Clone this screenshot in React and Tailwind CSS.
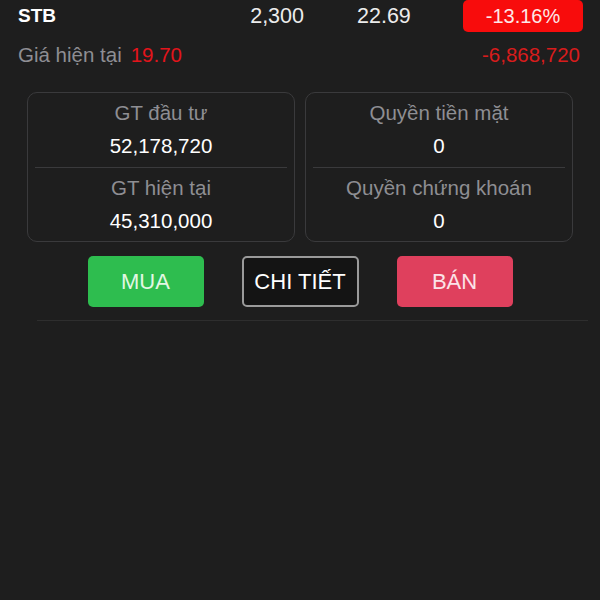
import React from "react";

const boxes = [
  [
    { label: "GT đầu tư", value: "52,178,720" },
    { label: "GT hiện tại", value: "45,310,000" },
  ],
  [
    { label: "Quyền tiền mặt", value: "0" },
    { label: "Quyền chứng khoán", value: "0" },
  ],
];

function InfoBox({ items }) {
  return (
    <div className="h-[150px] rounded-[10px] border border-[#3a3a3c] flex flex-col">
      {items.map((it, i) => (
        <React.Fragment key={it.label}>
          {i > 0 && <div className="mx-[7px] h-px bg-[#3a3a3c]" />}
          <div className="flex-1 flex flex-col items-center pt-[8px]">
            <div className="text-[20.5px] leading-[24px] text-[#8e8e93]">{it.label}</div>
            <div className="mt-[9px] text-[20.5px] leading-[24px] text-white">{it.value}</div>
          </div>
        </React.Fragment>
      ))}
    </div>
  );
}

export default function App() {
  return (
    <div className="w-[600px] h-[600px] bg-[#1e1e1e] overflow-hidden font-['Liberation_Sans',Arial,sans-serif]">
      <div className="flex items-center h-[32px] pl-[18px] pr-[17px] text-[21.5px] text-[#ececec]">
        <div className="w-[200px] text-[19px] font-bold text-white">STB</div>
        <div className="w-[86px] text-right">2,300</div>
        <div className="ml-[53px]">22.69</div>
        <div className="ml-auto w-[120px] h-[32px] rounded-[5px] bg-[#f80c0c] flex items-center justify-center text-[20px] text-[#fde8e8]">
          -13.16%
        </div>
      </div>

      <div className="flex items-center h-[30px] mt-[8px] pl-[18px] pr-[20px] text-[20.5px]">
        <span className="text-[#8e8e93]">Giá hiện tại</span>
        <span className="ml-[9px] text-[#e3141b]">19.70</span>
        <span className="ml-auto text-[#d81c1c]">-6,868,720</span>
      </div>

      <div className="grid grid-cols-2 gap-[10px] px-[27px] mt-[22px]">
        {boxes.map((b, i) => (
          <InfoBox key={i} items={b} />
        ))}
      </div>

      <div className="flex justify-center gap-[38px] mt-[14px]">
        <button className="w-[116px] h-[51px] rounded-[5px] bg-[#2ebd4f] text-[22px] text-[#e2f7e2]">MUA</button>
        <button className="w-[117px] h-[51px] rounded-[5px] border-2 border-[#9a9a9a] bg-[#141414] text-[22px] text-white">
          CHI TIẾT
        </button>
        <button className="w-[116px] h-[51px] rounded-[5px] bg-[#df405d] text-[22px] text-[#fbe3e8]">BÁN</button>
      </div>

      <div className="ml-[37px] mr-[12px] mt-[13px] h-px bg-[#2e2e2e]" />
    </div>
  );
}
